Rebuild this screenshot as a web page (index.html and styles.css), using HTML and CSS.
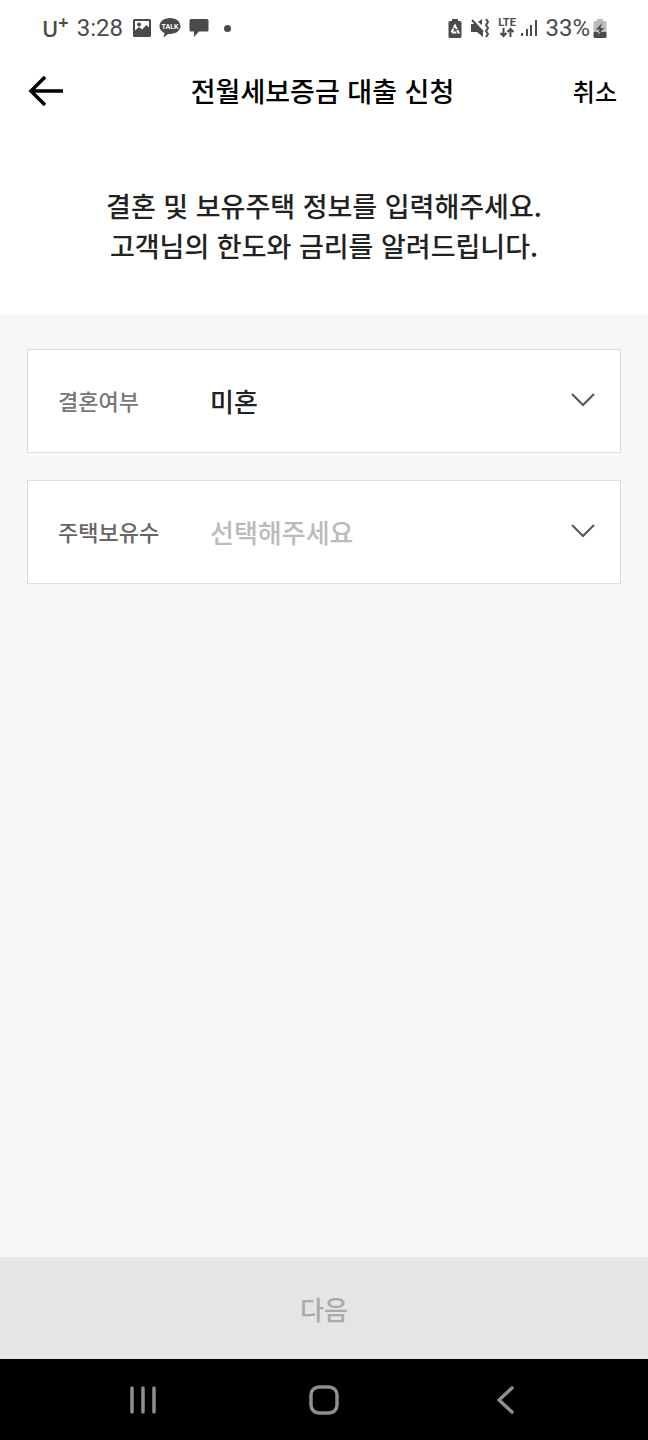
FILE: index.html
```html
<!DOCTYPE html>
<html lang="ko">
<head>
<meta charset="utf-8">
<meta name="viewport" content="width=device-width, initial-scale=1">
<title>전월세보증금 대출 신청</title>
<link rel="stylesheet" href="styles.css">
</head>
<body>
<div class="status">
  <div class="status-left">
    <span class="carrier">U<sup>+</sup></span>
    <span class="clock">3:28</span>
    <svg class="picture-icon" width="18" height="18" viewBox="0 0 18 18" aria-hidden="true"><path fill="#4a4a4a" fill-rule="evenodd" d="M1.500 0h15q1.500 0 1.500 1.500v15q0 1.500-1.500 1.500h-15q-1.500 0-1.500-1.500v-15q0-1.500 1.500-1.500zM2 2v9.500l4-3.500 3 2.500 4.500-4.500 2.500 2.500V2zM6 3.500a2 2 0 1 1 0 4 2 2 0 0 1 0-4z"/></svg>
    <svg class="talk-icon" width="22" height="20" viewBox="0 0 22 20" aria-hidden="true"><path fill="#4a4a4a" d="M11 0c6 0 10.500 3.600 10.500 8s-4.500 8-10.500 8l-2 0-4.500 3.500 1-4.500C2.500 13.700.5 11 .5 8 .5 3.600 5 0 11 0z"/><text x="11" y="11" text-anchor="middle" class="talk-text">TALK</text></svg>
    <svg class="chat-icon" width="20" height="20" viewBox="0 0 20 20" aria-hidden="true"><path fill="#4a4a4a" d="M2 1h16q1.500 0 1.500 1.500V12q0 1.500-1.500 1.500h-8L5 19v-5.500H2Q.5 13.500.5 12V2.500Q.5 1 2 1z"/></svg>
    <span class="dot"></span>
  </div>
  <div class="status-right">
    <svg class="saver-icon" width="14" height="19" viewBox="0 0 14 19" aria-hidden="true"><path fill="#4a4a4a" d="M4 0h6v2h2q1.500 0 1.500 1.500v14q0 1.500-1.500 1.500H2Q.5 19 .5 17.500v-14Q.5 2 2 2h2z"/><path fill="none" stroke="#fff" stroke-width="2" stroke-dasharray="4 1" d="M7 6.500l3.500 7h-7z"/></svg>
    <svg class="mute-icon" width="20" height="20" viewBox="0 0 20 20" aria-hidden="true"><path fill="#4a4a4a" d="M1 6h4l8 7v6l-6-5H1zM8 4l4-3v6z"/><path fill="none" stroke="#4a4a4a" stroke-width="2" d="M2 2l11 12M16 1l2 3-2 3 2 3-2 3 2 3-2 3"/></svg>
    <svg class="lte-icon" width="20" height="22" viewBox="0 0 20 22" aria-hidden="true"><text x="10" y="9" text-anchor="middle" class="lte-text">LTE</text><path fill="none" stroke="#4a4a4a" stroke-width="2" d="M6.500 11v8M3.500 16l3 3 3-3M13.500 20v-8M10.500 15l3-3 3 3"/></svg>
    <svg class="signal-icon" width="17" height="18" viewBox="0 0 17 18" aria-hidden="true"><path fill="#4a4a4a" d="M0 14h2v3H0zM5 10h2v7H5zM9 6h2v11H9zM14 1h2v16h-2z"/></svg>
    <span class="percent">33%</span>
    <svg class="battery-icon" width="14" height="19" viewBox="0 0 14 19" aria-hidden="true"><path fill="#bbb" d="M4 0h6v2h2q1.500 0 1.500 1.500V13H.5V3.500Q.5 2 2 2h2z"/><path fill="#4a4a4a" d="M.5 13h13v4.500q0 1.500-1.500 1.500H2Q.5 19 .5 17.500z"/><path fill="#4a4a4a" d="M9 4L3 10.500h3.500L5 16l6-7H7.500z"/><path fill="#ccc" d="M5.700 13h1.800L5 16z"/></svg>
  </div>
</div>

<header class="topbar">
  <button class="back" type="button" aria-label="뒤로"><svg width="36" height="32" viewBox="0 0 36 32" aria-hidden="true"><path fill="none" stroke="#000" stroke-width="3.500" d="M17 2L3 16l14 14M3 16h32"/></svg></button>
  <h1 class="title">전월세보증금 대출 신청</h1>
  <button class="cancel" type="button">취소</button>
</header>

<main class="content">
  <p class="intro">결혼 및 보유주택 정보를 입력해주세요.<br>고객님의 한도와 금리를 알려드립니다.</p>
  <form class="fields" id="loan-form">
    <div class="field">
      <label class="field-label" for="marriage">결혼여부</label>
      <select class="field-select" id="marriage"><option selected>미혼</option><option>기혼</option></select>
      <svg class="chevron" width="24" height="14" viewBox="0 0 24 14" aria-hidden="true"><path fill="none" stroke="#555" stroke-width="2" d="M1 1l11 11L23 1"/></svg>
    </div>
    <div class="field">
      <label class="field-label field-label-active" for="houses">주택보유수</label>
      <select class="field-select" id="houses" required><option value="" selected>선택해주세요</option><option>무주택</option><option>1주택</option></select>
      <svg class="chevron" width="24" height="14" viewBox="0 0 24 14" aria-hidden="true"><path fill="none" stroke="#555" stroke-width="2" d="M1 1l11 11L23 1"/></svg>
    </div>
  </form>
</main>

<button class="next" type="submit" form="loan-form" disabled>다음</button>

<nav class="system-nav">
  <button class="nav-button" type="button" aria-label="최근 앱"><svg width="32" height="32" viewBox="0 0 32 32" aria-hidden="true"><path fill="none" stroke="#8f8f8f" stroke-width="3.500" stroke-linecap="round" d="M5 4v24M16 4v24M27 4v24"/></svg></button>
  <button class="nav-button" type="button" aria-label="홈"><svg width="32" height="32" viewBox="0 0 32 32" aria-hidden="true"><rect x="3" y="3" width="26" height="26" rx="8" fill="none" stroke="#8f8f8f" stroke-width="3.500"/></svg></button>
  <button class="nav-button" type="button" aria-label="뒤로 가기"><svg width="32" height="32" viewBox="0 0 32 32" aria-hidden="true"><path fill="none" stroke="#8f8f8f" stroke-width="3.500" stroke-linecap="round" stroke-linejoin="round" d="M23 4L10 16l13 12"/></svg></button>
</nav>
</body>
</html>
```

FILE: styles.css
```css
* { box-sizing: border-box; }

body {
  margin: 0;
  min-height: 100vh;
  display: flex;
  flex-direction: column;
  background: #f7f7f7;
  color: #222;
  font-family: "Noto Sans CJK KR", sans-serif;
  font-weight: 500;
}

button, select { font: inherit; color: inherit; border: 0; padding: 0; margin: 0; background: none; }
svg { display: block; flex: none; }

.status {
  display: flex;
  justify-content: space-between;
  align-items: center;
  height: 56px;
  padding: 0 41px 0 42px;
  background: #fff;
  color: #4a4a4a;
  font-family: Roboto, sans-serif;
  font-size: 24px;
  font-weight: 400;
  line-height: 32px;
}

.status-left, .status-right { display: flex; align-items: center; }
.status-left { gap: 8px; }
.carrier { font-family: "Open Sans", sans-serif; font-size: 22px; font-weight: 600; }
.carrier sup { font-size: 18px; font-weight: 700; line-height: 0; }
.clock { margin-right: 2px; }
.dot { width: 7px; height: 7px; margin-left: 7px; border-radius: 50%; background: #4a4a4a; }
.talk-text { fill: #fff; font: 700 7px Roboto, sans-serif; }
.lte-text { fill: #4a4a4a; font: 700 11px Roboto, sans-serif; }
.status-right { gap: 7px; }
.saver-icon { margin-right: 1px; }
.signal-icon { margin-left: -3px; }
.percent { margin-right: -4px; }

.topbar {
  display: grid;
  grid-template-columns: 1fr auto 1fr;
  align-items: center;
  height: 70px;
  padding: 0 31px 0 28px;
  background: #fff;
  color: #000;
}

.back { justify-self: start; }
.title { margin: 0; font-size: 27px; font-weight: 500; line-height: 40px; }
.cancel { justify-self: end; font-size: 24px; line-height: 40px; }

.content { flex: 1; }

.intro {
  margin: 0;
  padding: 60px 24px 49px;
  background: #fff;
  font-size: 27px;
  line-height: 40px;
  text-align: center;
}

.fields { display: grid; gap: 27px; padding: 34px 27px; }

.field {
  display: grid;
  grid-template-columns: 182px 1fr;
  align-items: center;
  height: 104px;
  padding-bottom: 2px;
  border: 1px solid #ddd;
  background: #fff;
}

.field-label { padding-left: 30px; color: #777; font-size: 22px; grid-area: 1 / 1; }
.field-label-active { color: #666; }

.field-select {
  grid-area: 1 / 2;
  width: 100%;
  height: 100%;
  appearance: none;
  font-size: 26px;
}

.field-select:invalid { color: #bbb; }
.chevron { grid-area: 1 / 2; justify-self: end; margin-right: 25px; pointer-events: none; }

.next { height: 102px; background: #e5e5e5; color: #aaa; font-size: 26px; }

.system-nav {
  display: flex;
  justify-content: center;
  align-items: center;
  height: 81px;
  background: #000;
}

.nav-button { width: 28%; display: flex; justify-content: center; }
```
